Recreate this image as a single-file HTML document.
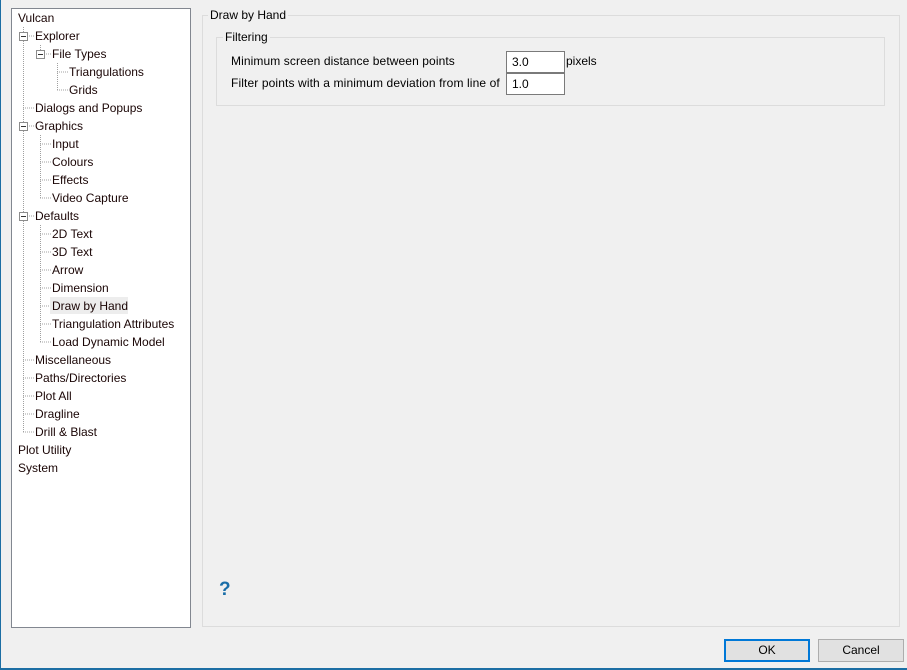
<!DOCTYPE html>
<html><head><style>
body{margin:0;width:907px;height:670px;background:#f0f0f0;position:relative;overflow:hidden;font-family:"Liberation Sans",sans-serif;font-size:12px;color:#000}
.a{position:absolute;white-space:nowrap}
.t{position:absolute;white-space:nowrap;color:#1a0505;line-height:18px}
.grp{position:absolute;border:1px solid #dcdcdc}
.lbl{position:absolute;background:#f0f0f0;padding:0 2px;line-height:14px}
.in{position:absolute;background:#fff;border:1px solid #7a7a7a;box-sizing:border-box;padding:3px 0 0 5px;line-height:14px}
.btn{position:absolute;box-sizing:border-box;background:#e1e1e1;border:1px solid #adadad;text-align:center;line-height:20px}
</style></head><body>
<div class="a" style="left:0;top:0;width:1px;height:670px;background:#1c6ea4"></div>
<div class="a" style="left:0;top:668px;width:907px;height:2px;background:#1c6ea4"></div>
<div class="a" style="left:11px;top:8px;width:178px;height:618px;background:#fff;border:1px solid #828790"></div>
<svg class="a" style="left:0;top:0" width="200" height="630">
<g stroke="#a0a0a0" stroke-dasharray="1,1" fill="none">
<path d="M23.5 27V432M40.5 45V54M57.5 63V90M40.5 135V198M40.5 225V342"/>
<path d="M23 36H34M40 54H51M57 72H68M57 90H68M23 108H34M23 126H34M40 144H51M40 162H51M40 180H51M40 198H51M23 216H34M40 234H51M40 252H51M40 270H51M40 288H51M40 306H51M40 324H51M40 342H51M23 360H34M23 378H34M23 396H34M23 414H34M23 432H34"/>
</g>
<g fill="#fff" stroke="#8c8c8c">
<rect x="19.5" y="32.5" width="8" height="8"/><rect x="36.5" y="50.5" width="8" height="8"/><rect x="19.5" y="122.5" width="8" height="8"/><rect x="19.5" y="212.5" width="8" height="8"/>
</g>
<g stroke="#333"><path d="M21 36.5H26M38 54.5H43M21 126.5H26M21 216.5H26"/></g>
</svg>
<div class="a" style="left:50px;top:297px;width:78px;height:17px;background:#ededed"></div>
<div class="t" style="left:18px;top:9px">Vulcan</div>
<div class="t" style="left:35px;top:27px">Explorer</div>
<div class="t" style="left:52px;top:45px">File Types</div>
<div class="t" style="left:69px;top:63px">Triangulations</div>
<div class="t" style="left:69px;top:81px">Grids</div>
<div class="t" style="left:35px;top:99px">Dialogs and Popups</div>
<div class="t" style="left:35px;top:117px">Graphics</div>
<div class="t" style="left:52px;top:135px">Input</div>
<div class="t" style="left:52px;top:153px">Colours</div>
<div class="t" style="left:52px;top:171px">Effects</div>
<div class="t" style="left:52px;top:189px">Video Capture</div>
<div class="t" style="left:35px;top:207px">Defaults</div>
<div class="t" style="left:52px;top:225px">2D Text</div>
<div class="t" style="left:52px;top:243px">3D Text</div>
<div class="t" style="left:52px;top:261px">Arrow</div>
<div class="t" style="left:52px;top:279px">Dimension</div>
<div class="t" style="left:52px;top:297px">Draw by Hand</div>
<div class="t" style="left:52px;top:315px">Triangulation Attributes</div>
<div class="t" style="left:52px;top:333px">Load Dynamic Model</div>
<div class="t" style="left:35px;top:351px">Miscellaneous</div>
<div class="t" style="left:35px;top:369px">Paths/Directories</div>
<div class="t" style="left:35px;top:387px">Plot All</div>
<div class="t" style="left:35px;top:405px">Dragline</div>
<div class="t" style="left:35px;top:423px">Drill &amp; Blast</div>
<div class="t" style="left:18px;top:441px">Plot Utility</div>
<div class="t" style="left:18px;top:459px">System</div>

<div class="grp" style="left:202px;top:15px;width:696px;height:610px"></div>
<div class="lbl" style="left:208px;top:8px">Draw by Hand</div>
<div class="grp" style="left:216px;top:37px;width:667px;height:67px"></div>
<div class="lbl" style="left:223px;top:30px">Filtering</div>
<div class="a" style="left:231px;top:54px;letter-spacing:0.1px">Minimum screen distance between points</div>
<div class="a" style="left:231px;top:76px;letter-spacing:0.12px">Filter points with a minimum deviation from line of</div>
<div class="in" style="left:506px;top:51px;width:59px;height:22px">3.0</div>
<div class="in" style="left:506px;top:73px;width:59px;height:22px">1.0</div>
<div class="a" style="left:566px;top:54px">pixels</div>
<div class="a" style="left:219px;top:579px;color:#1a6ea8;font-weight:bold;font-size:19px">?</div>
<div class="btn" style="left:724px;top:639px;width:86px;height:23px;border:2px solid #0078d7;line-height:19px">OK</div>
<div class="btn" style="left:818px;top:639px;width:86px;height:23px">Cancel</div>
</body></html>
